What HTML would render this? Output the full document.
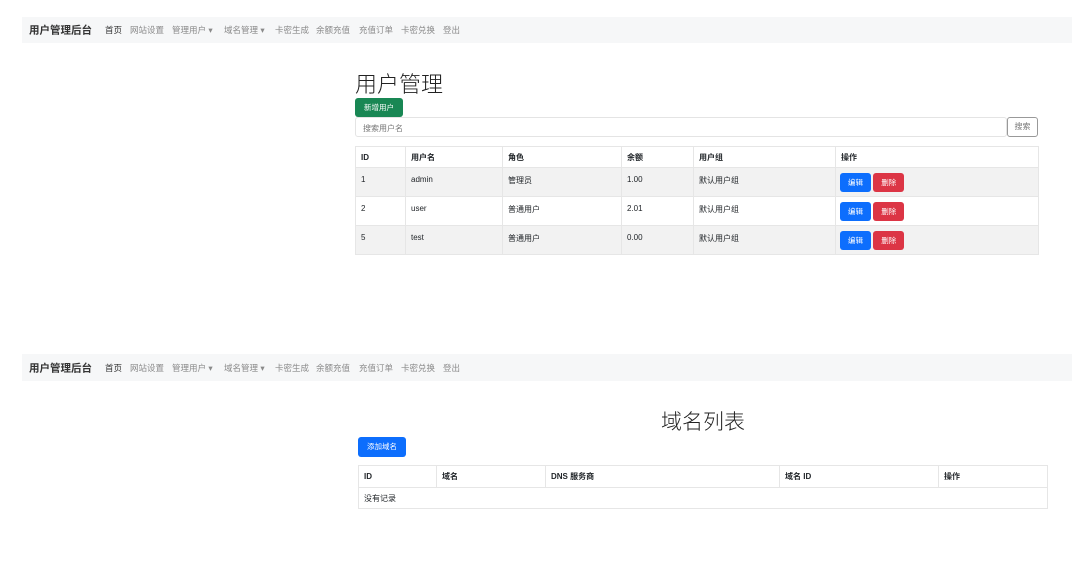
<!DOCTYPE html>
<html><head><meta charset="utf-8"><style>
*{box-sizing:border-box;margin:0;padding:0}
body{width:1072px;height:565px;background:#fff;position:relative;overflow:hidden;font-family:"Liberation Sans","Noto Sans CJK SC",sans-serif;color:#212529}
.nav{position:absolute;left:22px;right:0;height:26px;background:#f6f7f8;font-size:8.5px;color:#8a8a8a;white-space:nowrap}
.nav *{position:absolute;top:50%;transform:translateY(-50%)}
.nav b{font-size:10.5px;color:#333;font-weight:600;left:7px}
.nav .a{color:#333}
.ab{position:absolute}
table{border-collapse:collapse;font-size:8px;position:absolute;table-layout:fixed}
td,th{border:1px solid #e6e6e6;text-align:left;padding:0 5px;vertical-align:top}
th{font-weight:600;vertical-align:middle}
.btn{display:inline-block;color:#fff;border-radius:3px;font-size:7.5px;text-align:center}
</style></head><body>
<div class="nav" style="top:17px"><b>用户管理后台</b><span class="a" style="left:83px">首页</span><span style="left:108px">网站设置</span><span style="left:150px">管理用户 ▾</span><span style="left:202px">域名管理 ▾</span><span style="left:253px">卡密生成</span><span style="left:294px">余额充值</span><span style="left:337px">充值订单</span><span style="left:379px">卡密兑换</span><span style="left:421px">登出</span></div>
<div class="ab" style="left:355px;top:67px;font-size:22px;color:#222;font-weight:300">用户管理</div>
<div class="ab btn" style="left:355px;top:98px;width:48px;height:19px;line-height:19px;background:#198754">新增用户</div>
<div class="ab" style="left:355px;top:117px;width:652px;height:20px;border:1px solid #e4e4e4;border-radius:3px;font-size:8px;color:#777;padding:5px 7px">搜索用户名</div>
<div class="ab" style="left:1007px;top:117px;width:31px;height:20px;border:1px solid #999;border-radius:3px;font-size:8px;color:#777;text-align:center;line-height:18px">搜索</div>
<table style="left:355px;top:146px;width:683px">
<colgroup><col style="width:50px"><col style="width:97px"><col style="width:119px"><col style="width:72px"><col style="width:142px"><col style="width:203px"></colgroup>
<tr style="height:21px"><th>ID</th><th>用户名</th><th>角色</th><th>余额</th><th>用户组</th><th>操作</th></tr>
<tr style="height:29px;background:#f2f2f2"><td style="padding-top:7px">1</td><td style="padding-top:7px">admin</td><td style="padding-top:7px">管理员</td><td style="padding-top:7px">1.00</td><td style="padding-top:7px">默认用户组</td><td style="padding-top:5px;padding-left:4px"><span class="btn" style="width:31px;height:19px;line-height:19px;background:#0d6efd">编辑</span> <span class="btn" style="width:31px;height:19px;line-height:19px;background:#dc3545">删除</span></td></tr>
<tr style="height:29px"><td style="padding-top:7px">2</td><td style="padding-top:7px">user</td><td style="padding-top:7px">普通用户</td><td style="padding-top:7px">2.01</td><td style="padding-top:7px">默认用户组</td><td style="padding-top:5px;padding-left:4px"><span class="btn" style="width:31px;height:19px;line-height:19px;background:#0d6efd">编辑</span> <span class="btn" style="width:31px;height:19px;line-height:19px;background:#dc3545">删除</span></td></tr>
<tr style="height:29px;background:#f2f2f2"><td style="padding-top:7px">5</td><td style="padding-top:7px">test</td><td style="padding-top:7px">普通用户</td><td style="padding-top:7px">0.00</td><td style="padding-top:7px">默认用户组</td><td style="padding-top:5px;padding-left:4px"><span class="btn" style="width:31px;height:19px;line-height:19px;background:#0d6efd">编辑</span> <span class="btn" style="width:31px;height:19px;line-height:19px;background:#dc3545">删除</span></td></tr>
</table>
<div class="nav" style="top:354px;height:27px"><b>用户管理后台</b><span class="a" style="left:83px">首页</span><span style="left:108px">网站设置</span><span style="left:150px">管理用户 ▾</span><span style="left:202px">域名管理 ▾</span><span style="left:253px">卡密生成</span><span style="left:294px">余额充值</span><span style="left:337px">充值订单</span><span style="left:379px">卡密兑换</span><span style="left:421px">登出</span></div>
<div class="ab" style="left:603px;width:200px;text-align:center;top:406px;font-size:21px;color:#222;font-weight:300">域名列表</div>
<div class="ab btn" style="left:358px;top:437px;width:48px;height:20px;line-height:20px;background:#0d6efd">添加域名</div>
<table style="left:358px;top:465px;width:689px">
<colgroup><col style="width:78px"><col style="width:109px"><col style="width:234px"><col style="width:159px"><col style="width:109px"></colgroup>
<tr style="height:22px"><th>ID</th><th>域名</th><th>DNS 服务商</th><th>域名 ID</th><th>操作</th></tr>
<tr style="height:21px"><td colspan="5" style="vertical-align:middle">没有记录</td></tr>
</table>
</body></html>
